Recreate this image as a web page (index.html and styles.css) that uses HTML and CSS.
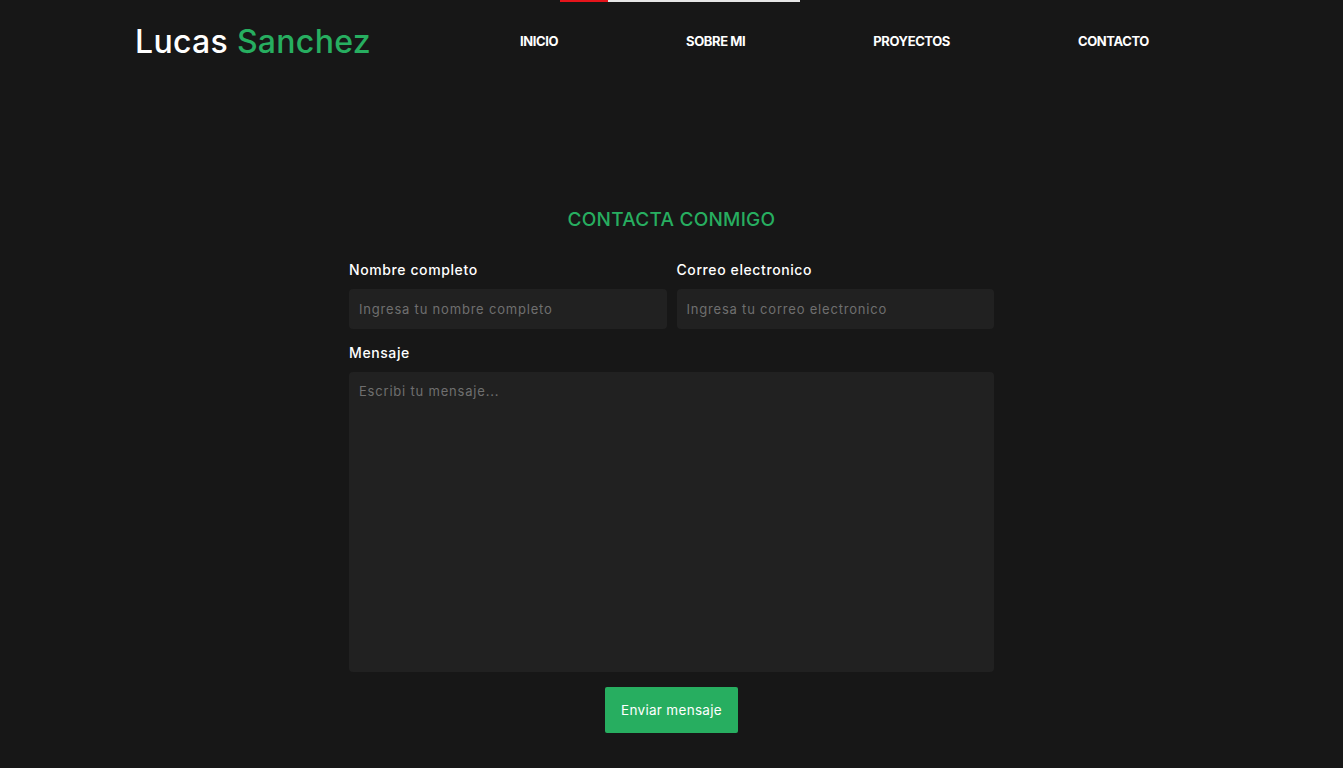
FILE: index.html
```html
<!DOCTYPE html>
<html lang="es">
<head>
<meta charset="utf-8">
<title>Lucas Sanchez</title>
<link rel="stylesheet" href="styles.css">
</head>
<body>
<div class="topline"><span class="red"></span><span class="white"></span></div>
<header class="header">
  <a class="logo" href="#">Lucas <span class="green">Sanchez</span></a>
  <nav class="nav">
    <a href="#">INICIO</a>
    <a href="#">SOBRE MI</a>
    <a href="#">PROYECTOS</a>
    <a href="#">CONTACTO</a>
  </nav>
</header>
<main class="contact">
  <h2 class="title">CONTACTA CONMIGO</h2>
  <form class="form">
    <div class="row">
      <div class="field">
        <label>Nombre completo</label>
        <input type="text" placeholder="Ingresa tu nombre completo">
      </div>
      <div class="field">
        <label>Correo electronico</label>
        <input type="email" placeholder="Ingresa tu correo electronico">
      </div>
    </div>
    <div class="field">
      <label>Mensaje</label>
      <textarea placeholder="Escribi tu mensaje..."></textarea>
    </div>
    <button type="button" class="btn">Enviar mensaje</button>
  </form>
</main>
</body>
</html>
```
FILE: styles.css
```css
* { box-sizing: border-box; }
html, body { margin: 0; padding: 0; }
body {
  background: #171717;
  color: #fff;
  font-family: Inter, "Open Sans", sans-serif;
  height: 768px;
  overflow: hidden;
}
.topline {
  position: absolute;
  top: 0;
  left: 560px;
  display: flex;
  height: 2px;
}
.topline .red { width: 48px; background: #e5141b; }
.topline .white { width: 192px; background: #e6e6e6; }
.header {
  height: 82px;
  display: flex;
  align-items: center;
  padding-left: 135px;
}
.logo {
  color: #fff;
  text-decoration: none;
  font-size: 32px;
  font-weight: 500;
  letter-spacing: 0.3px;
  width: 385px;
}
.green { color: #27ae60; }
.nav {
  display: flex;
  gap: 128px;
}
.nav a {
  color: #fff;
  text-decoration: none;
  font-size: 13px;
  font-weight: 700;
  letter-spacing: -0.4px;
}
.contact {
  width: 645px;
  margin: 126px auto 0;
}
.title {
  text-align: center;
  color: #27ae60;
  font-size: 19px;
  font-weight: 500;
  letter-spacing: 0.25px;
  margin: 0 0 29px;
  line-height: 24px;
}
.form { display: flex; flex-direction: column; }
.row { display: flex; gap: 10px; }
.row .field { flex: 1; }
.field { display: flex; flex-direction: column; margin-bottom: 15px; }
label {
  font-size: 14px;
  font-weight: 500;
  letter-spacing: 0.6px;
  line-height: 18px;
  margin-bottom: 10px;
}
input, textarea {
  background: #212121;
  border: none;
  border-radius: 4px;
  color: #ddd;
  font-family: inherit;
  font-size: 13px;
  letter-spacing: 0.8px;
  padding: 0 10px;
  outline: none;
}
input { height: 40px; }
textarea { height: 300px; padding-top: 11px; resize: none; }
::placeholder { color: #6f6f6f; }
.btn {
  align-self: center;
  margin-top: 0;
  background: #27ae60;
  color: #fff;
  border: none;
  border-radius: 2px;
  width: 133px;
  height: 46px;
  font-family: inherit;
  font-size: 13.5px;
  letter-spacing: 0.3px;
}
```
